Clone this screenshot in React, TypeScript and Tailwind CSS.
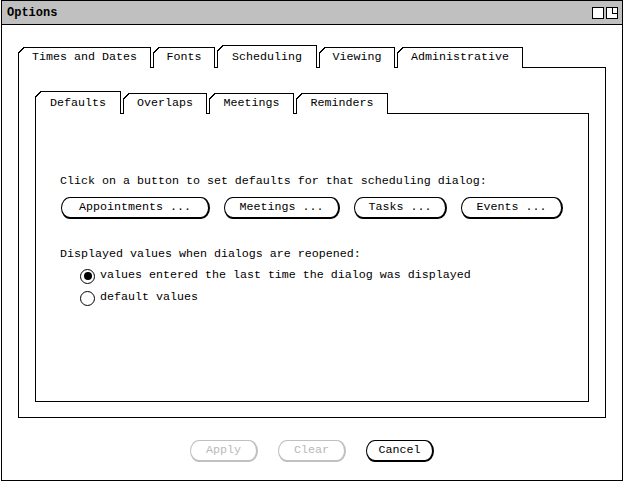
import clsx from 'clsx'

const outerTabs = [
  { label: 'Times and Dates', w: 'w-[133px]' },
  { label: 'Fonts', w: 'w-[62px]' },
  { label: 'Scheduling', w: 'w-[100px]', active: true },
  { label: 'Viewing', w: 'w-[76px]' },
  { label: 'Administrative', w: 'w-[126px]' },
]

const innerTabs = [
  { label: 'Defaults', w: 'w-[86px]', active: true },
  { label: 'Overlaps', w: 'w-[84px]' },
  { label: 'Meetings', w: 'w-[85px]' },
  { label: 'Reminders', w: 'w-[92px]' },
]

const dialogButtons = [
  { label: 'Appointments ...', w: 'w-[149px]' },
  { label: 'Meetings ...', w: 'w-[116px]' },
  { label: 'Tasks ...', w: 'w-[93px]' },
  { label: 'Events ...', w: 'w-[102px]' },
]

function Tab({ label, w, active }: { label: string; w: string; active?: boolean }) {
  return (
    <div
      className={clsx(
        'relative flex items-center justify-center border-l border-t border-r border-black bg-white',
        w,
        active ? 'z-10 h-[23px] pt-[2px]' : 'h-[21px]'
      )}
    >
      <span className="absolute -left-px -top-px h-[6px] w-[6px] bg-white">
        <svg width="6" height="6" viewBox="0 0 6 6" shapeRendering="crispEdges">
          <path d="M0.5 6 L6 0.5" stroke="black" strokeWidth="1" fill="none" />
        </svg>
      </span>
      {label}
    </div>
  )
}

function PillButton({ label, w, disabled }: { label: string; w: string; disabled?: boolean }) {
  return (
    <button
      className={clsx(
        'flex h-[22px] items-center justify-center rounded-[9px/11px] border-t border-l border-r-2 border-b-2 bg-white',
        w,
        disabled ? 'border-[#c0c0c0] text-[#b8b8b8]' : 'border-black text-black'
      )}
    >
      {label}
    </button>
  )
}

function Radio({ checked, label }: { checked?: boolean; label: string }) {
  return (
    <div className="flex h-[22px] items-center">
      <span className="flex h-[15px] w-[15px] items-center justify-center rounded-full border border-black">
        {checked && <span className="h-[8px] w-[8px] rounded-full bg-black" />}
      </span>
      <span className="ml-[5px]">{label}</span>
    </div>
  )
}

export default function App() {
  return (
    <div className="h-[484px] w-[626px] bg-white font-['Liberation_Mono',monospace] text-[11.67px] leading-none text-black">
      <div className="ml-px flex h-[481px] w-[622px] flex-col border border-black">
        {/* title bar */}
        <div className="flex h-[24px] shrink-0 items-center justify-between border-b border-black bg-[#c0c0c0] pl-[5px] pr-[4px]">
          <span className="text-[12px] font-bold">Options</span>
          <div className="flex gap-[2px]">
            <svg width="12" height="12" viewBox="0 0 12 12" shapeRendering="crispEdges">
              <rect x="0.5" y="0.5" width="11" height="11" fill="white" stroke="black" />
            </svg>
            <svg width="12" height="12" viewBox="0 0 12 12" shapeRendering="crispEdges">
              <rect x="0.5" y="0.5" width="11" height="11" fill="white" stroke="black" />
              <path d="M6.5 0.5 V6.5 H11.5" stroke="black" fill="none" />
            </svg>
          </div>
        </div>

        <div className="flex flex-1 flex-col pl-[16px] pt-[20px]">
          {/* outer tabs */}
          <div className="-mb-px flex items-end gap-[2px]">
            {outerTabs.map((t) => (
              <Tab key={t.label} {...t} />
            ))}
          </div>
          <div className="flex h-[351px] w-[588px] flex-col border border-black px-[16px] pt-[23px] pb-[15px]">
            {/* inner tabs */}
            <div className="-mb-px flex items-end gap-[2px]">
              {innerTabs.map((t) => (
                <Tab key={t.label} {...t} />
              ))}
            </div>
            <div className="flex flex-1 flex-col border border-black pl-[24px] pt-[62px]">
              <div className="h-[14px]">Click on a button to set defaults for that scheduling dialog:</div>
              <div className="mt-[7px] ml-px flex gap-[14px]">
                {dialogButtons.map((b) => (
                  <PillButton key={b.label} {...b} />
                ))}
              </div>
              <div className="mt-[30px] h-[14px]">Displayed values when dialogs are reopened:</div>
              <div className="ml-[20px] mt-[2px] flex flex-col">
                <Radio checked label="values entered the last time the dialog was displayed" />
                <Radio label="default values" />
              </div>
            </div>
          </div>
        </div>

        {/* bottom buttons */}
        <div className="flex justify-center gap-[20px] pb-[18px]">
          <PillButton label="Apply" w="w-[68px]" disabled />
          <PillButton label="Clear" w="w-[68px]" disabled />
          <PillButton label="Cancel" w="w-[68px]" />
        </div>
      </div>
    </div>
  )
}
